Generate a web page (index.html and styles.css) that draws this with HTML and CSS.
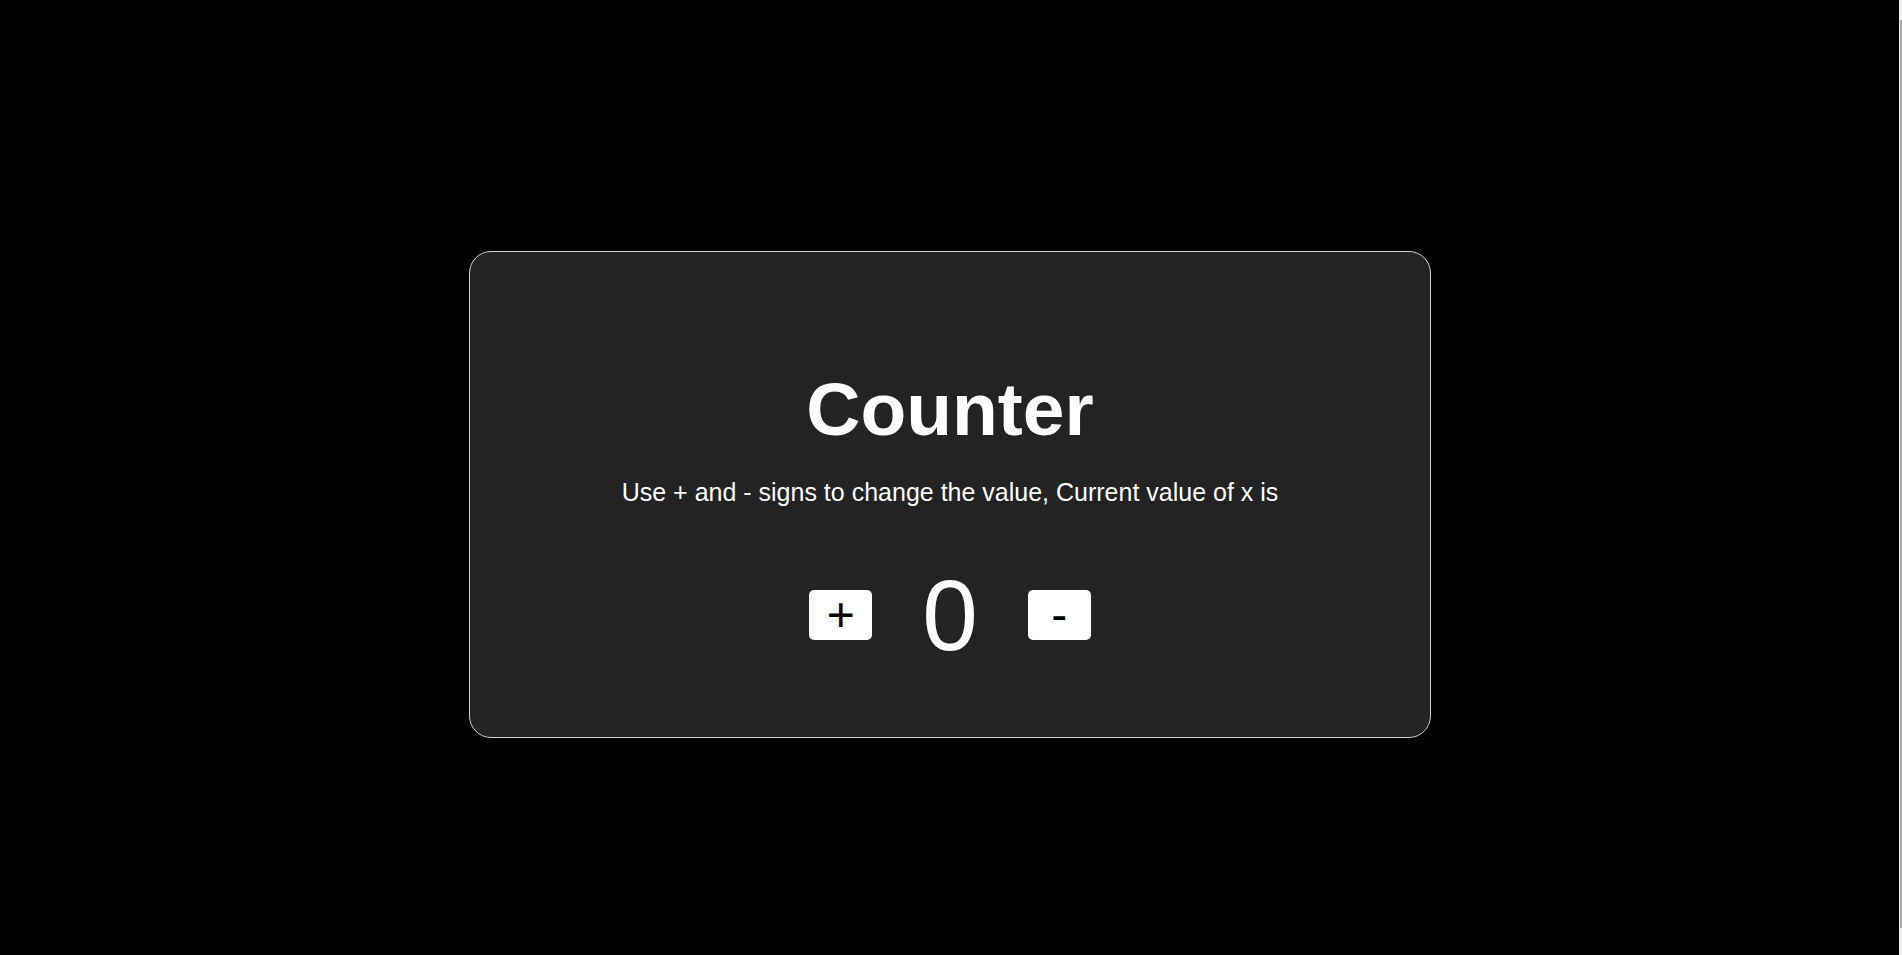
FILE: index.html
```html
<!DOCTYPE html>
<html lang="en">
<head>
<meta charset="utf-8">
<title>Counter</title>
<link rel="stylesheet" href="styles.css">
</head>
<body>
<main class="page">
  <section class="card">
    <h1 class="title">Counter</h1>
    <p class="subtitle">Use + and - signs to change the value, Current value of x is</p>
    <div class="controls">
      <button class="btn" type="button">+</button>
      <span class="value">0</span>
      <button class="btn" type="button">-</button>
    </div>
  </section>
</main>
<div class="scrollbar"><div class="scrollbar-thumb"></div></div>
</body>
</html>
```

FILE: styles.css
```css
html, body {
  margin: 0;
  padding: 0;
  background: #000;
  height: 100%;
  overflow: hidden;
}

body {
  font-family: "Liberation Sans", Arial, sans-serif;
  color: #fff;
}

.page {
  display: flex;
  justify-content: center;
  padding-top: 251px;
  padding-right: 2px;
}

.card {
  box-sizing: border-box;
  width: 962px;
  height: 487px;
  background: #232323;
  border: 1px solid #d0d0d0;
  border-radius: 22px;
  display: flex;
  flex-direction: column;
  align-items: center;
  padding-top: 120px;
}

.title {
  margin: 0;
  font-size: 75px;
  line-height: 75px;
  font-weight: 700;
}

.subtitle {
  margin: 33px 0 0;
  font-size: 25px;
  line-height: 25px;
}

.controls {
  margin-top: 60px;
  display: flex;
  align-items: center;
  gap: 50px;
  height: 100px;
}

.btn {
  width: 63px;
  height: 50px;
  padding: 0;
  border: none;
  border-radius: 5px;
  background: #fff;
  color: #000;
  font-family: "Liberation Sans", Arial, sans-serif;
  font-size: 48px;
  line-height: 50px;
  display: flex;
  align-items: center;
  justify-content: center;
}

.value {
  font-size: 100px;
  line-height: 100px;
  font-weight: 400;
}

.scrollbar {
  position: fixed;
  top: 0;
  right: 0;
  width: 3px;
  height: 100%;
  background: #f1f1f1;
}

.scrollbar-thumb {
  margin-top: 20px;
  height: 908px;
  width: 2px;
  margin-left: 1px;
  background: #a8a8a8;
}
```
